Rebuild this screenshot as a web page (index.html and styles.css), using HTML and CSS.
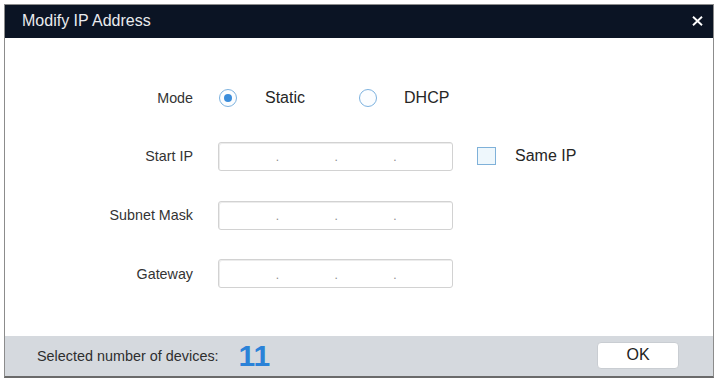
FILE: index.html
```html
<!DOCTYPE html>
<html>
<head>
<meta charset="utf-8">
<link rel="stylesheet" href="styles.css">
</head>
<body>
<div class="dialog">
  <div class="titlebar">
    <span class="title">Modify IP Address</span>
    <svg class="close" width="11" height="10" viewBox="0 0 11 10"><path d="M1 0.8 L10 9.2 M10 0.8 L1 9.2" stroke="#ffffff" stroke-width="1.9" fill="none"/></svg>
  </div>
  <div class="content">
    <div class="form">
      <div class="label">Mode</div>
      <div class="mode">
        <span class="radio checked"></span>
        <span class="opt opt-static">Static</span>
        <span class="radio"></span>
        <span class="opt opt-dhcp">DHCP</span>
      </div>

      <div class="label">Start IP</div>
      <div class="ip"><span></span><i>.</i><span></span><i>.</i><span></span><i>.</i><span></span></div>
      <div class="same">
        <span class="check"></span>
        <span class="opt">Same IP</span>
      </div>

      <div class="label">Subnet Mask</div>
      <div class="ip"><span></span><i>.</i><span></span><i>.</i><span></span><i>.</i><span></span></div>
      <div></div>

      <div class="label">Gateway</div>
      <div class="ip"><span></span><i>.</i><span></span><i>.</i><span></span><i>.</i><span></span></div>
      <div></div>
    </div>
  </div>
  <div class="footer">
    <span class="sel">Selected number of devices:</span>
    <span class="count">11</span>
    <button class="ok">OK</button>
  </div>
</div>
</body>
</html>
```
FILE: styles.css
```css
html, body {
  margin: 0;
  padding: 0;
  background: #ffffff;
}
body {
  font-family: "Liberation Sans", Arial, sans-serif;
  color: #333333;
}
.dialog {
  margin: 4px 0 0 4px;
  width: 710px;
  height: 374px;
  box-sizing: border-box;
  border: 1px solid #8c8c8c;
  border-bottom: 2px solid #6a6a6a;
  display: flex;
  flex-direction: column;
  background: #ffffff;
}
.titlebar {
  height: 33px;
  flex: none;
  background: #0b1424;
  display: flex;
  align-items: center;
  justify-content: space-between;
  padding: 0 10px 0 17px;
}
.title {
  color: #e9ebee;
  font-size: 16px;
  position: relative;
  top: -1px;
}
.close {
  display: block;
  margin-top: -2px;
}
.content {
  flex: 1;
  padding-top: 45px;
}
.form {
  display: grid;
  grid-template-columns: 188px 235px 160px;
  grid-auto-rows: 29px;
  column-gap: 25px;
  row-gap: 29.8px;
  align-items: center;
}
.label {
  text-align: right;
  font-size: 14.3px;
  color: #333333;
}
.mode {
  grid-column: 2 / span 2;
  display: flex;
  align-items: center;
  padding-left: 1px;
}
.radio {
  width: 16px;
  height: 16px;
  border-radius: 50%;
  border: 1.5px solid #7db2df;
  background: #fbfdff;
  display: flex;
  align-items: center;
  justify-content: center;
  flex: none;
}
.radio.checked::after {
  content: "";
  width: 8px;
  height: 8px;
  border-radius: 50%;
  background: #3b8ddb;
}
.opt {
  font-size: 16px;
  color: #262626;
}
.opt-static {
  margin: 0 54px 0 28px;
}
.opt-dhcp {
  margin-left: 27px;
}
.ip {
  height: 29px;
  box-sizing: border-box;
  border: 1px solid #d2d2d2;
  border-radius: 3px;
  box-shadow: inset 1px 1px 0 #ececec;
  display: grid;
  grid-template-columns: 1fr 2px 1fr 2px 1fr 2px 1fr;
  align-items: center;
  font-size: 12px;
  color: #8c8c8c;
}
.ip i {
  font-style: normal;
  text-align: center;
  position: relative;
  top: 1px;
}
.same {
  display: flex;
  align-items: center;
  margin-left: -1px;
}
.check {
  width: 19px;
  height: 18px;
  box-sizing: border-box;
  border: 1.5px solid #7fb1d9;
  background: #eef7fc;
  margin-right: 19px;
  flex: none;
}
.footer {
  height: 40px;
  flex: none;
  background: #d5d9de;
  display: flex;
  align-items: center;
  padding: 0 34px 0 32px;
}
.sel {
  font-size: 14.4px;
  color: #2e2e2e;
}
.count {
  font-size: 30px;
  font-weight: bold;
  color: #2a82d8;
  margin-left: 20px;
  line-height: 1;
}
.ok {
  margin-left: auto;
  width: 82px;
  height: 27px;
  border: 1px solid #c9cdd2;
  border-radius: 4px;
  background: #ffffff;
  font-family: "Liberation Sans", Arial, sans-serif;
  font-size: 16px;
  color: #222222;
  padding: 0;
  position: relative;
  top: -1px;
}
```
